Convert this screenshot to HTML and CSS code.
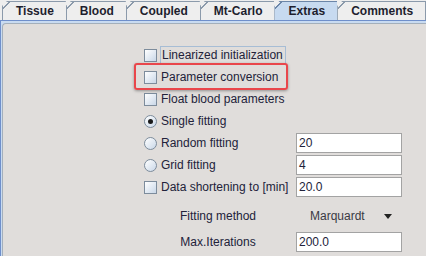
FILE: index.html
```html
<!DOCTYPE html>
<html>
<head>
  <title>Extras</title>
  <link rel="stylesheet" href="styles.css">
</head>
<body>
  <!-- Tabbladen -->
  <div class="tabs">
    <div class="tab">Tissue</div>
    <div class="tab">Blood</div>
    <div class="tab">Coupled</div>
    <div class="tab">Mt-Carlo</div>
    <div class="tab selected">Extras</div>
    <div class="tab last">Comments</div>
  </div>

  <!-- Inhoud van het Extras tabblad -->
  <div class="panel">
    <div class="inner">
      <div class="form">
        <div class="row">
          <div class="opt"><span class="check"></span><span class="label focus">Linearized initialization</span></div>
        </div>
        <div class="row">
          <div class="opt"><span class="check"></span><span class="label">Parameter conversion</span></div>
        </div>
        <div class="row">
          <div class="opt"><span class="check"></span><span class="label">Float blood parameters</span></div>
        </div>
        <div class="row">
          <div class="opt"><span class="radio on"></span><span class="label">Single fitting</span></div>
        </div>
        <div class="row">
          <div class="opt"><span class="radio"></span><span class="label">Random fitting</span></div>
          <div class="field">20</div>
        </div>
        <div class="row">
          <div class="opt"><span class="radio"></span><span class="label">Grid fitting</span></div>
          <div class="field">4</div>
        </div>
        <div class="row">
          <div class="opt"><span class="check"></span><span class="label">Data shortening to [min]</span></div>
          <div class="field">20.0</div>
        </div>
        <div class="row method">
          <div class="caption">Fitting method</div>
          <div class="combo"><span>Marquardt</span><span class="arrow"></span></div>
        </div>
        <div class="row iter">
          <div class="caption">Max.Iterations</div>
          <div class="field">200.0</div>
        </div>
      </div>
    </div>
  </div>

  <!-- Rode markering rond de optie -->
  <div class="highlight"></div>
</body>
</html>
```

FILE: styles.css
```css
/* Basis: Java Metal look */
body {
  margin: 0;
  background-color: #eeeeee;
  font-family: "Liberation Sans", Arial, sans-serif;
  font-size: 12px;
  color: #22223a;
  position: relative;
  width: 426px;
  height: 256px;
  overflow: hidden;
}

/* Tabbalk */
.tabs {
  display: flex;
  height: 20px;
  padding-left: 2px;
  box-sizing: border-box;
  padding-top: 1px;
}

.tab {
  flex: none;
  white-space: nowrap;
  padding: 0 12px 0 13px;
  font-weight: bold;
  line-height: 18px;
  background: linear-gradient(135deg, transparent 0 4px, #8b9aab 4px 5px, #eeeeee 5px);
  border-left: 1px solid #8b9aab;
  border-top: 1px solid #8b9aab;
  clip-path: polygon(5px 0, 100% 0, 100% 100%, 0 100%, 0 5px);
  color: #1e1e2e;
}

.tab.selected {
  background: linear-gradient(135deg, transparent 0 4px, #6c86a8 4px 5px, #c7daf0 5px);
  border-color: #6c86a8;
}

.tab.last {
  border-right: 1px solid #8b9aab;
}

/* Paneel met blauwe rand */
.panel {
  border-top: 1px solid #6f8fcb;
  border-left: 1px solid #6f8fcb;
  background-color: #c9dbf1;
  padding: 1px 0 0 1px;
  height: 235px;
}

.inner {
  background-color: #e0dddb;
  border-top: 1px solid #a3afbb;
  border-left: 1px solid #a3afbb;
  border-top-left-radius: 4px;
  height: 100%;
  margin-top: 1px;
}

.form {
  padding: 20px 0 0 141px;
}

.row {
  display: flex;
  align-items: center;
  height: 22px;
}

.opt {
  display: flex;
  align-items: center;
  width: 152px;
}

.label {
  margin-left: 4px;
  white-space: nowrap;
}

.label.focus {
  border: 1px solid #a7bdd5;
  padding: 1px 2px 1px 1px;
  margin-left: 3px;
}

/* Selectievakje */
.check {
  width: 11px;
  height: 11px;
  border: 1px solid #7d8c9c;
  background: linear-gradient(135deg, #ffffff, #c9d7e8);
  flex: none;
}

/* Keuzerondje */
.radio {
  width: 11px;
  height: 11px;
  border: 1px solid #7d8c9c;
  border-radius: 50%;
  background: linear-gradient(135deg, #ffffff, #c9d7e8);
  flex: none;
  position: relative;
}

.radio.on::after {
  content: "";
  position: absolute;
  left: 3px;
  top: 3px;
  width: 5px;
  height: 5px;
  border-radius: 50%;
  background-color: #1a1a1a;
}

/* Tekstvelden */
.field {
  height: 18px;
  line-height: 18px;
  border: 1px solid #a3a3a3;
  background-color: white;
  padding-left: 2px;
  width: 102px;
}

.method {
  margin-top: 7px;
}

.iter {
  margin-top: 4px;
}

.caption {
  width: 152px;
  text-align: center;
  padding-right: 4px;
  box-sizing: border-box;
}

.combo {
  width: 106px;
  display: flex;
  align-items: center;
  padding-left: 14px;
  box-sizing: border-box;
  color: #3a3a44;
}

.arrow {
  margin-left: 19px;
  width: 0;
  height: 0;
  border-left: 4px solid transparent;
  border-right: 4px solid transparent;
  border-top: 5px solid #222222;
}

/* Rode markering */
.highlight {
  position: absolute;
  left: 134px;
  top: 63px;
  width: 150px;
  height: 23px;
  border: 2px solid #e9464b;
  border-radius: 3px;
  box-shadow: 0 1px 3px rgba(0, 0, 0, 0.35);
}
```
